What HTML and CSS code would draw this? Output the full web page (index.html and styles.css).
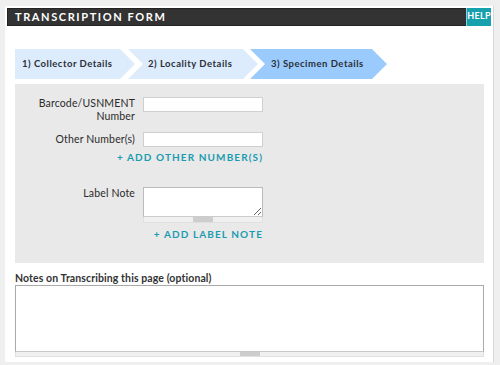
FILE: index.html
```html
<!DOCTYPE html>
<html>
<head>
<meta charset="utf-8">
<link rel="stylesheet" href="styles.css">
</head>
<body>
<div class="panel">
  <div class="header">
    <span class="title">TRANSCRIPTION FORM</span>
    <span class="help">HELP</span>
  </div>
  <div class="steps">
    <div class="step step1">1) Collector Details</div>
    <div class="step step2">2) Locality Details</div>
    <div class="step step3 active">3) Specimen Details</div>
  </div>
  <div class="box">
    <div class="row row-barcode">
      <label class="lbl">Barcode/USNMENT<br>Number</label>
      <input class="field" type="text">
    </div>
    <div class="row row-other">
      <label class="lbl">Other Number(s)</label>
      <input class="field" type="text">
    </div>
    <div class="addlink link-other">+ ADD OTHER NUMBER(S)</div>
    <div class="row row-note">
      <label class="lbl">Label Note</label>
      <div class="tawrap">
        <textarea class="ta small"></textarea>
        <div class="grip"><span class="handle"></span></div>
      </div>
    </div>
    <div class="addlink link-note">+ ADD LABEL NOTE</div>
  </div>
  <div class="notes-label">Notes on Transcribing this page (optional)</div>
  <div class="notes-wrap">
    <textarea class="ta big"></textarea>
    <div class="grip wide"><span class="handle"></span></div>
  </div>
</div>
</body>
</html>
```
FILE: styles.css
```css
html, body {
  margin: 0;
  padding: 0;
}
body {
  background: #efefef;
  font-family: Lato, "Open Sans", "DejaVu Sans", sans-serif;
  color: #333;
  width: 500px;
  height: 365px;
  overflow: hidden;
}
.panel {
  box-sizing: border-box;
  margin: 6px 0 0 5px;
  width: 489px;
  height: 356px;
  background: #fff;
  border-right: 1px solid #d8d8d8;
  padding: 2px 2px 0 2px;
}
.header {
  display: flex;
  align-items: stretch;
  height: 18px;
  background: #333;
  border: 1px solid #222;
  box-sizing: border-box;
}
.title {
  flex: 1;
  color: #fff;
  font-weight: 700;
  font-size: 11px;
  letter-spacing: 1.6px;
  line-height: 16px;
  padding-left: 7px;
}
.help {
  flex: 0 0 auto;
  background: #17a0ae;
  color: #fff;
  font-weight: 700;
  font-size: 9px;
  letter-spacing: 0.3px;
  line-height: 16px;
  width: 25px;
  box-sizing: border-box;
  text-align: center;
  margin: -1px -1px -1px 0;
  border-left: 1px solid #8ccfd6;
  white-space: nowrap;
}
.steps {
  display: flex;
  margin: 23px 0 0 8px;
  height: 30px;
}
.step {
  height: 30px;
  line-height: 30px;
  font-size: 9.5px;
  font-weight: 700;
  letter-spacing: 0.5px;
  color: #2a2f38;
  background: #dcecfd;
  box-sizing: border-box;
  white-space: nowrap;
}
.step1 {
  width: 120px;
  padding-left: 7px;
  clip-path: polygon(0 0, 105px 0, 100% 50%, 105px 100%, 0 100%);
}
.step2 {
  width: 130px;
  margin-left: -7px;
  padding-left: 20px;
  clip-path: polygon(0 0, 115px 0, 100% 50%, 115px 100%, 0 100%, 15px 50%);
}
.step3 {
  width: 137px;
  margin-left: -8px;
  padding-left: 21px;
  clip-path: polygon(0 0, 122px 0, 100% 50%, 122px 100%, 0 100%, 15px 50%);
}
.step.active {
  background: #9bcbfd;
}
.box {
  margin: 5px 7px 0 8px;
  height: 179px;
  background: #e9e9e9;
  padding-top: 13px;
  box-sizing: border-box;
}
.row {
  display: flex;
  align-items: flex-start;
}
.lbl {
  width: 120px;
  text-align: right;
  font-size: 10.5px;
  line-height: 13px;
  color: #2b2b2b;
  letter-spacing: 0.15px;
}
.field {
  margin: 0 0 0 8px;
  width: 120px;
  height: 15px;
  box-sizing: border-box;
  border: 1px solid #cfcfcf;
  background: #fff;
  padding: 0;
  outline: none;
}
.row-other {
  margin-top: 9px;
  align-items: center;
}
.addlink {
  color: #1b9bb0;
  font-weight: 700;
  font-size: 10px;
  letter-spacing: 1.1px;
  text-align: right;
  width: 248px;
  line-height: 12px;
}
.link-other {
  margin-top: 4px;
}
.row-note {
  margin-top: 24px;
}
.tawrap {
  margin-left: 8px;
  width: 120px;
}
.ta {
  display: block;
  box-sizing: border-box;
  margin: 0;
  padding: 0;
  background: #fff;
  border: 1px solid #bbb;
  border-bottom-color: #ccc;
  outline: none;
}
.ta.small {
  width: 120px;
  height: 30px;
  resize: both;
}
.grip {
  height: 6px;
  background: #f0f0f0;
  border: 1px solid #e0e0e0;
  border-top: none;
  box-sizing: border-box;
  display: flex;
  justify-content: center;
}
.handle {
  width: 20px;
  height: 5px;
  background: #cdcdcd;
}
.link-note {
  margin-top: 5px;
}
.notes-label {
  margin: 8px 0 0 8px;
  font-size: 10.5px;
  font-weight: 700;
  line-height: 14px;
  color: #333;
  letter-spacing: 0.1px;
}
.notes-wrap {
  margin: 0 7px 0 8px;
}
.ta.big {
  width: 469px;
  height: 67px;
  resize: none;
  border: 1px solid #aaa;
  border-bottom-color: #c8c8c8;
}
.grip.wide {
  height: 5px;
}
.grip.wide .handle {
  height: 4px;
}
```
